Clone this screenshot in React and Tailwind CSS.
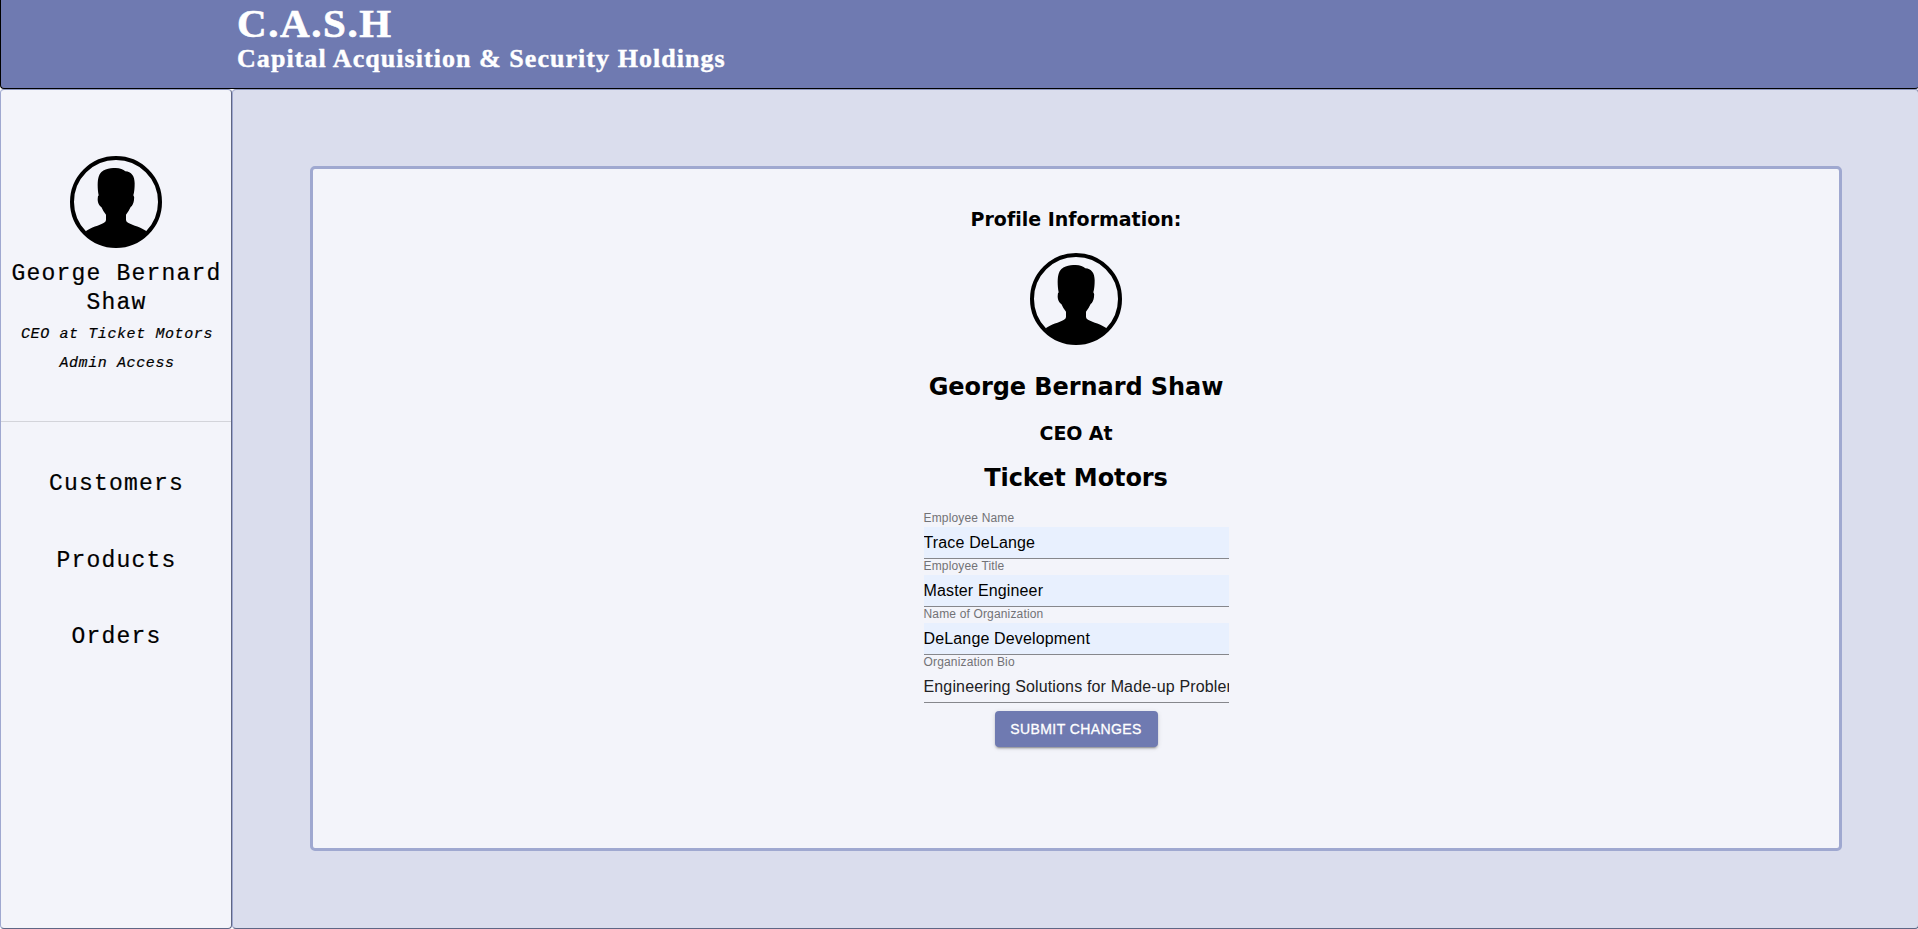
const SERIF = "font-['Georgia','Liberation_Serif',serif]";
const MONO = "font-['Courier_New','Liberation_Mono',monospace]";
const VERDANA = "font-['Verdana','DejaVu_Sans',sans-serif]";
const SANS = "font-['Helvetica','Liberation_Sans',sans-serif]";

function Avatar() {
  return (
    <svg viewBox="0 0 276 276" className="block h-[92px] w-[92px] shrink-0">
      <circle cx="138" cy="138" r="132" fill="none" stroke="#000" strokeWidth="12" />
      <path
        d="M47 226C62 213 88 209 102 200Q108 197 108 192V176Q100 167 94 153C88 150 83 140 83 130Q83 120 86 118C82 96 82 74 86 62C93 39 118 36 137 36C150 36 160 40 166 46C184 47 194 60 194 82C194 96 193 108 190 118Q194 122 192 132C191 141 187 150 182 153Q176 166 168 176V192Q168 197 174 200C190 209 214 213 230 226Q193 273 138 274Q82 273 47 226Z"
        fill="#000"
      />
    </svg>
  );
}

function Field({ label, value, filled }) {
  return (
    <label className={`flex h-12 w-[305px] flex-col ${SANS}`}>
      <span className="h-4 text-[12px] leading-[15px] tracking-[0.16px] text-[#727276]">{label}</span>
      <span
        className={`h-8 overflow-hidden border-b border-[#86878c] text-[16px] leading-[31px] tracking-[0.15px] whitespace-nowrap ${
          filled ? "bg-[#e8f0fe] text-black" : "text-[#212123]"
        }`}
      >
        {value}
      </span>
    </label>
  );
}

export default function App() {
  return (
    <div className="flex h-[929px] w-full flex-col overflow-hidden bg-white text-black">
      <header className={`h-[89px] w-[1919px] shrink-0 rounded-b-[4px] border-b border-l border-black bg-[#6f7ab1] pl-[236px] font-bold text-white ${SERIF}`}>
        <h1 className="h-[46px] text-[41px] leading-[46px] tracking-[1.6px] [-webkit-text-stroke:0.6px_white]">C.A.S.H</h1>
        <h2 className="h-7 text-[26px] leading-[26px] tracking-[1.05px] [-webkit-text-stroke:0.4px_white]">Capital Acquisition &amp; Security Holdings</h2>
      </header>
      <div className="flex min-h-0 w-[1919px] flex-1">
        <aside className={`flex w-[232px] shrink-0 flex-col rounded-[4px] border border-t-[#8f98bf] border-r-[#5f6685] border-b-[#5f6685] border-l-[#9fa8d0] bg-[#f3f4fa] text-center [-webkit-text-stroke:0.2px_black] ${MONO}`}>
          <div className="flex h-[332px] flex-col items-center border-b border-[#d3d4da] pt-[66px]">
            <Avatar />
            <p className="mt-3 pl-px text-[23px] leading-[29px] tracking-[1.2px]">George Bernard Shaw</p>
            <p className="mt-0.5 pl-0.5 text-[15px] leading-[29px] tracking-[0.6px] italic">CEO at Ticket Motors</p>
            <p className="pl-0.5 text-[15px] leading-[29px] tracking-[0.6px] italic">Admin Access</p>
          </div>
          <nav className="flex flex-col gap-[47px] pt-12 pl-px text-[23px] leading-[29.5px] tracking-[1.2px]">
            <a>Customers</a>
            <a>Products</a>
            <a>Orders</a>
          </nav>
        </aside>
        <main className="flex-1 rounded-[4px] border border-t-[#8f98bf] border-r-[#5f6685] border-b-[#5f6685] border-l-[#9fa8d0] bg-[#dadded] pt-[76px] pl-[77px]">
          <section className={`flex h-[685px] w-[1532px] flex-col items-center rounded-[5px] border-3 border-[#9fa8d0] bg-[#f3f4fa] pt-[38px] font-bold [font-variant-ligatures:none] ${VERDANA}`}>
            <h3 className="text-[19px] leading-6">Profile Information:</h3>
            <div className="mt-[22px]">
              <Avatar />
            </div>
            <h2 className="mt-[27px] text-[24px] leading-[30px] tracking-[-0.07px]">George Bernard Shaw</h2>
            <h3 className="mt-[19px] text-[19px] leading-6 tracking-[-0.1px]">CEO At</h3>
            <h2 className="mt-[18px] text-[24px] leading-[30px] tracking-[-0.1px]">Ticket Motors</h2>
            <form className="mt-[18px] flex flex-col items-center font-normal">
              <Field label="Employee Name" value="Trace DeLange" filled />
              <Field label="Employee Title" value="Master Engineer" filled />
              <Field label="Name of Organization" value="DeLange Development" filled />
              <Field label="Organization Bio" value="Engineering Solutions for Made-up Problems" />
              <button
                type="button"
                className={`mt-2 h-9 w-[163px] rounded-[4px] bg-[#6f7ab1] text-[14px] font-normal tracking-[0.4px] text-white shadow-[0_3px_1px_-2px_rgba(0,0,0,0.2),0_2px_2px_0_rgba(0,0,0,0.14),0_1px_5px_0_rgba(0,0,0,0.12)] [-webkit-text-stroke:0.3px_white] ${SANS}`}
              >
                SUBMIT CHANGES
              </button>
            </form>
          </section>
        </main>
      </div>
    </div>
  );
}
